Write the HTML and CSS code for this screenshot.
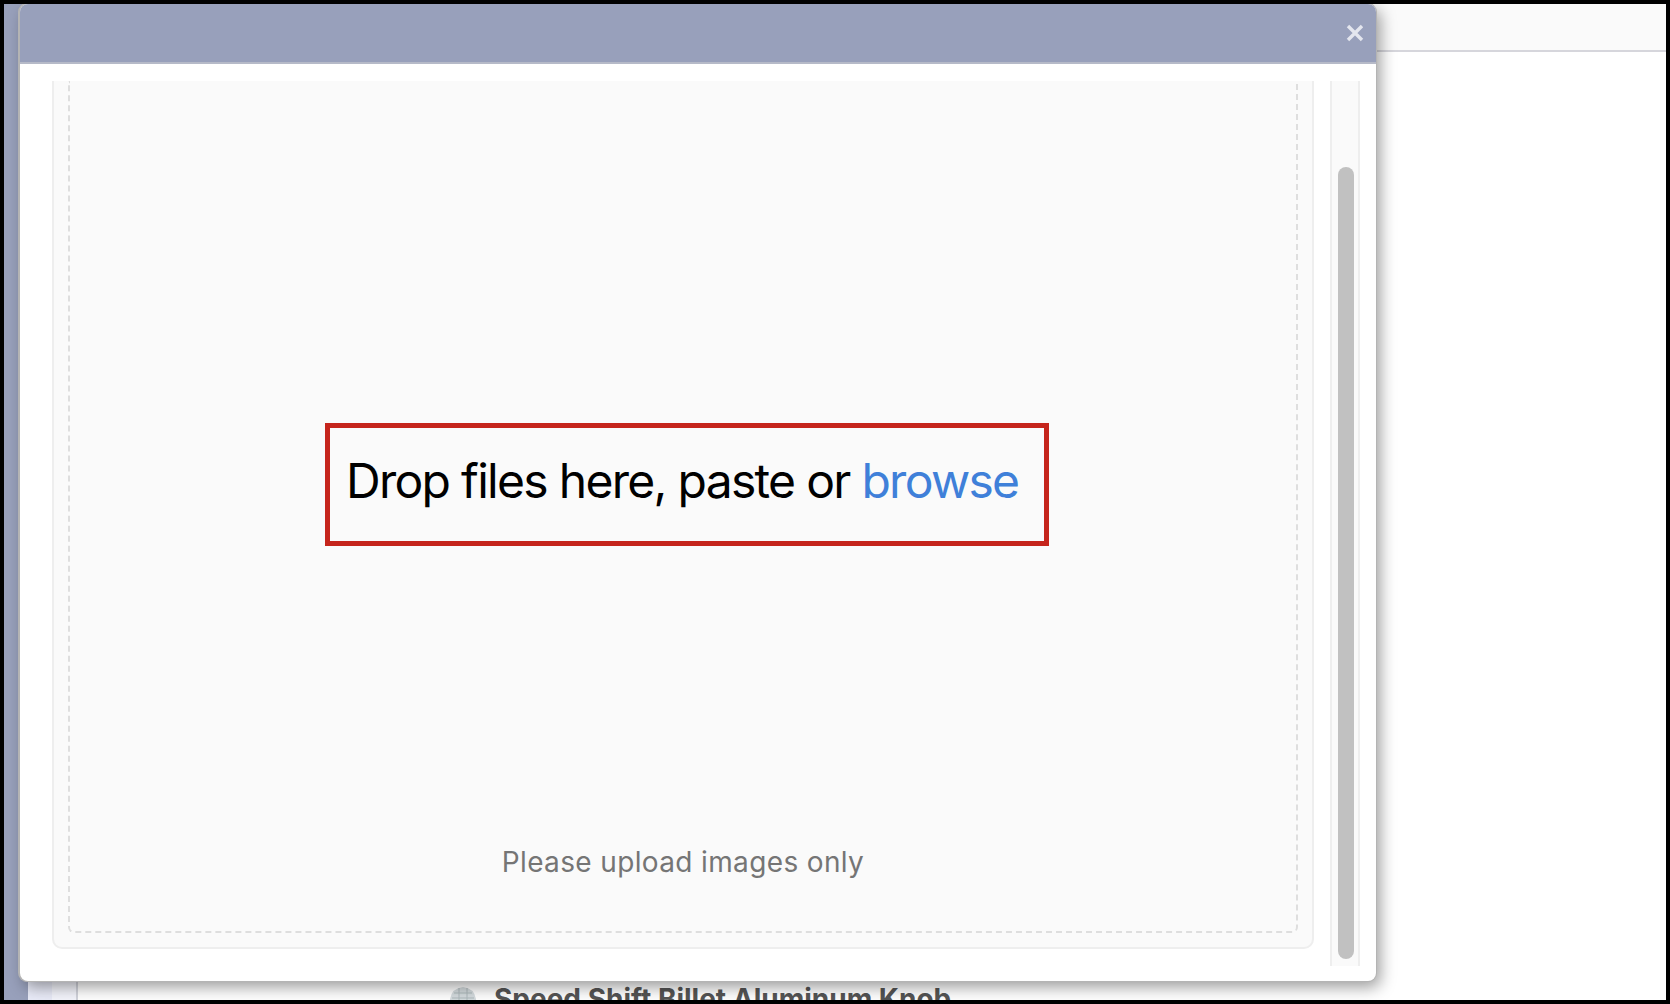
FILE: index.html
```html
<!DOCTYPE html>
<html lang="en">
<head>
<meta charset="utf-8">
<title>Upload images</title>
<link rel="stylesheet" href="styles.css">
</head>
<body>
<div class="frame">
  <aside class="sidebar"></aside>
  <div class="subnav"><div class="subnav-a"></div><div class="subnav-b"></div></div>
  <main class="page">
    <div class="topbar"></div>
    <div class="page-body">
      <div class="product">
        <svg class="thumb" width="30" height="30" viewBox="0 0 30 30"><path d="M2 14 Q4 3 15 2 Q26 3 28 14 L28 26 L2 26 Z" fill="#d5dcdf"/><path d="M6 8 H24 M4 13 H26 M11 3 V24 M19 3 V24" stroke="#aeb9bc" fill="none"/></svg>
        <span class="product-name">Speed Shift Billet Aluminum Knob</span>
      </div>
    </div>
  </main>
  <div class="modal">
    <header class="modal-header">
      <svg class="close" width="18" height="18" viewBox="0 0 18 18"><path d="M2 2 L16 16 M16 2 L2 16" stroke="#e4e6ee" stroke-width="3.4" fill="none"/></svg>
    </header>
    <div class="modal-body">
      <section class="dropzone-outer">
        <div class="dropzone">
          <div class="drop-spacer"></div>
          <div class="drop-label"><span>Drop files here, paste or <span class="browse">browse</span></span></div>
          <div class="drop-note">Please upload images only</div>
        </div>
      </section>
      <div class="scroll-track"><div class="scroll-thumb"></div></div>
    </div>
  </div>
</div>
</body>
</html>
```

FILE: styles.css
```css
* { box-sizing: border-box; }
html, body { margin: 0; height: 100%; background: #000; }
body { padding: 4px; overflow: hidden; font-family: Inter, "Liberation Sans", sans-serif; }
.frame {
  position: relative;
  width: 1662px;
  height: 996px;
  display: flex;
  background: #fff;
  overflow: hidden;
}
.sidebar { width: 24px; background: #98a0bb; flex: none; }
.subnav { width: 50px; flex: none; display: flex; border-right: 2px solid #d2d4dc; }
.subnav-a { width: 24px; background: #e9ebf8; }
.subnav-b { width: 24px; background: #f4f5fc; }
.page { flex: 1; display: flex; flex-direction: column; }
.topbar { height: 48px; background: #fafafa; border-bottom: 2px solid #d6d6dc; flex: none; }
.page-body { flex: 1; display: flex; flex-direction: column; justify-content: flex-end; }
.product { display: flex; align-items: flex-start; gap: 16px; height: 16px; margin-left: 370px; overflow: hidden; }
.thumb { flex: none; margin-top: 1px; }
.product-name { font-weight: 700; font-size: 28px; line-height: 30px; color: #555; }
.modal {
  position: absolute;
  left: 16px;
  top: 0;
  width: 1356px;
  height: 977px;
  background: #fff;
  border-radius: 8px;
  box-shadow: 0 0 0 1px #b4b4b4, -1px 0 0 1px #b4b4b4, 4px 6px 16px rgba(0,0,0,.4);
  display: flex;
  flex-direction: column;
  overflow: hidden;
}
.modal-header {
  height: 60px;
  flex: none;
  background: #98a0bb;
  border-bottom: 2px solid #b6bac8;
  display: flex;
  justify-content: flex-end;
  align-items: center;
  padding-right: 12px;
}
.modal-body { flex: 1; display: flex; padding: 17px 16px 17px 32px; gap: 16px; min-height: 0; }
.dropzone-outer {
  width: 1263px;
  height: 868px;
  background: #fafafa;
  border: 2px solid #eeeeee;
  border-top: 0;
  border-radius: 0 0 10px 10px;
  padding: 0 14px 14px;
}
.dropzone {
  height: 100%;
  border: 2px dashed #dedede;
  border-top: 0;
  border-radius: 0 0 6px 6px;
  display: flex;
  flex-direction: column;
  align-items: center;
}
.drop-spacer { height: 342px; flex: none; }
.drop-label {
  width: 724px;
  height: 123px;
  border: 5px solid #c5251c;
  display: flex;
  align-items: center;
  padding: 0 0 8px 16px;
  margin-left: 8px;
  font-size: 48px;
  letter-spacing: -1.7px;
  color: #000;
  white-space: nowrap;
}
.browse { color: #3f80d9; }
.drop-note { margin-top: 299px; font-size: 28px; letter-spacing: .36px; color: #757575; }
.scroll-track {
  width: 30px;
  height: 885px;
  background: #fafafa;
  border: solid #eeeeee;
  border-width: 0 2px;
  padding: 86px 6px 0;
  flex: none;
}
.scroll-thumb { height: 792px; width: 16px; background: #c1c1c1; border-radius: 8px; }
```
